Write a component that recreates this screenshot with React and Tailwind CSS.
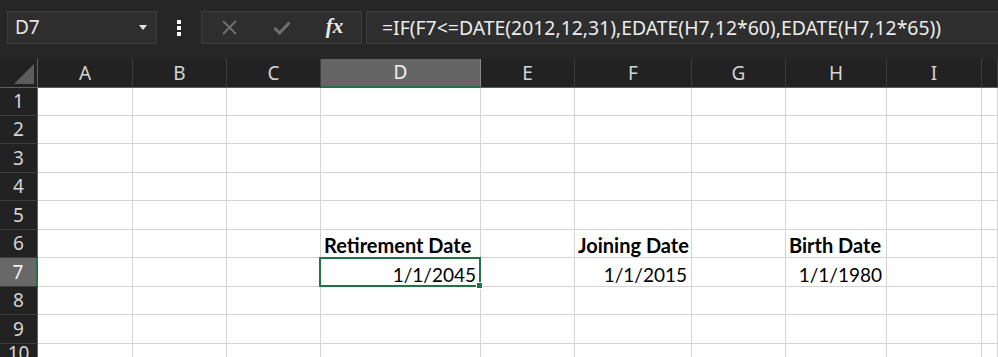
import React from "react";

const cols = [
  { l: "A", w: 95 },
  { l: "B", w: 94 },
  { l: "C", w: 94 },
  { l: "D", w: 160 },
  { l: "E", w: 94 },
  { l: "F", w: 117 },
  { l: "G", w: 94 },
  { l: "H", w: 101 },
  { l: "I", w: 95 },
  { l: "", w: 0 },
];

const rowHeights = [28, 28, 29, 28, 29, 28, 29, 28, 29, 28];

const ui = { fontFamily: '"Noto Sans", "Open Sans", sans-serif' };
const cellFont = { fontFamily: 'Lato, "Liberation Sans", sans-serif' };

function Cell({ r, c }) {
  const col = cols[c];
  let content = null;
  if (r === 6 && col.l === "D") content = <span className="font-bold text-[20px]">Retirement Date</span>;
  if (r === 6 && col.l === "F") content = <span className="font-bold text-[20px]">Joining Date</span>;
  if (r === 6 && col.l === "H") content = <span className="font-bold text-[20px]">Birth Date</span>;
  const right =
    r === 7 && (col.l === "D" || col.l === "F" || col.l === "H");
  if (r === 7 && col.l === "D") content = <span className="text-[19px]">1/1/2045</span>;
  if (r === 7 && col.l === "F") content = <span className="text-[19px]">1/1/2015</span>;
  if (r === 7 && col.l === "H") content = <span className="text-[19px]">1/1/1980</span>;
  const selected = r === 7 && col.l === "D";
  return (
    <div
      className={
        "relative bg-white border-r border-b border-[#d4d4d4] flex items-end pb-[2px] whitespace-nowrap text-black leading-none " +
        (right ? "justify-end pr-[4px]" : "justify-start pl-[3px]")
      }
      style={cellFont}
    >
      {content}
      {selected && (
        <div className="absolute -left-[2px] -top-[1px] -right-[1px] -bottom-[1px] border-2 border-[#217346] z-10">
          <div className="absolute -right-[4px] -bottom-[4px] w-[7px] h-[7px] bg-[#217346] border border-white" />
        </div>
      )}
    </div>
  );
}

export default function App() {
  return (
    <div className="w-[998px] h-[357px] overflow-hidden bg-[#262626] flex flex-col">
      {/* Formula bar */}
      <div className="h-[59px] shrink-0 flex items-start pt-[11px]" style={ui}>
        <div className="ml-[7px] w-[150px] h-[33px] bg-[#2e2e2e] border border-[#3c3c3c] flex items-center justify-between pl-[7px] pr-[9px]">
          <span className="text-[19px] text-[#e6e6e6] leading-none">D7</span>
          <svg width="8" height="5" viewBox="0 0 8 5">
            <path d="M0 0 H8 L4 5 Z" fill="#e6e6e6" />
          </svg>
        </div>
        <div className="w-[44px] h-[33px] flex flex-col items-center justify-center gap-[2px]">
          <div className="w-[4px] h-[4px] bg-white" />
          <div className="w-[4px] h-[4px] bg-white" />
          <div className="w-[4px] h-[4px] bg-white" />
        </div>
        <div className="w-[161px] h-[33px] bg-[#2e2e2e] border border-[#3c3c3c] flex items-center">
          <div className="w-[53px] flex justify-center pl-[1px]">
            <svg width="15" height="15" viewBox="0 0 15 15">
              <path d="M1 1 L14 14 M14 1 L1 14" stroke="#6e6e6e" strokeWidth="2" />
            </svg>
          </div>
          <div className="w-[53px] flex justify-center">
            <svg width="18" height="14" viewBox="0 0 18 14">
              <path d="M1.5 7 L6.5 12 L16.5 1.5" stroke="#6e6e6e" strokeWidth="3" fill="none" />
            </svg>
          </div>
          <div className="w-[53px] flex justify-center">
            <span
              className="italic font-bold text-[21px] text-[#ececec] leading-none -mt-[3px]"
              style={{ fontFamily: '"Liberation Serif", "DejaVu Serif", serif' }}
            >
              fx
            </span>
          </div>
        </div>
        <div className="ml-[4px] flex-1 h-[33px] bg-[#2e2e2e] border border-r-0 border-[#3c3c3c] flex items-center pl-[15px]">
          <span className="text-[19.4px] text-[#ececec] leading-none whitespace-nowrap">
            =IF(F7&lt;=DATE(2012,12,31),EDATE(H7,12*60),EDATE(H7,12*65))
          </span>
        </div>
      </div>

      {/* Grid */}
      <div
        className="grid flex-1 grid-cols-[38px_95px_94px_94px_160px_94px_117px_94px_101px_95px_1fr] grid-rows-[29px_28px_28px_29px_28px_29px_28px_29px_28px_29px_1fr]"
      >
        {/* corner */}
        <div className="bg-[#222222] border-r border-b border-[#5f5f5f] flex items-end justify-end pr-[3px] pb-[3px]">
          <svg width="20" height="20" viewBox="0 0 20 20">
            <path d="M20 0 V20 H0 Z" fill="#5c5c5c" />
          </svg>
        </div>
        {cols.map((c, i) =>
          c.l === "D" ? (
            <div
              key={i}
              className="bg-[#656565] border-r border-[#8a8a8a] border-b-2 border-b-[#217346] flex items-center justify-center text-[19px] text-[#f0f0f0] leading-none"
              style={ui}
            >
              {c.l}
            </div>
          ) : (
            <div
              key={i}
              className="bg-[#222222] border-r border-[#3d3d3d] border-b border-b-[#5f5f5f] flex items-center justify-center text-[19px] text-[#d4d4d4] leading-none"
              style={ui}
            >
              {c.l}
            </div>
          )
        )}
        {rowHeights.map((h, ri) => {
          const r = ri + 1;
          return (
            <React.Fragment key={r}>
              {r === 7 ? (
                <div
                  className="bg-[#686868] border-r-2 border-r-[#217346] border-b border-[#3d3d3d] flex items-center justify-center text-[19px] text-[#f0f0f0] leading-none"
                  style={ui}
                >
                  {r}
                </div>
              ) : (
                <div
                  className="bg-[#222222] border-r border-r-[#5f5f5f] border-b border-[#3d3d3d] flex items-center justify-center text-[19px] text-[#d4d4d4] leading-none"
                  style={ui}
                >
                  {r}
                </div>
              )}
              {cols.map((c, ci) => (
                <Cell key={ci} r={r} c={ci} />
              ))}
            </React.Fragment>
          );
        })}
      </div>
    </div>
  );
}
